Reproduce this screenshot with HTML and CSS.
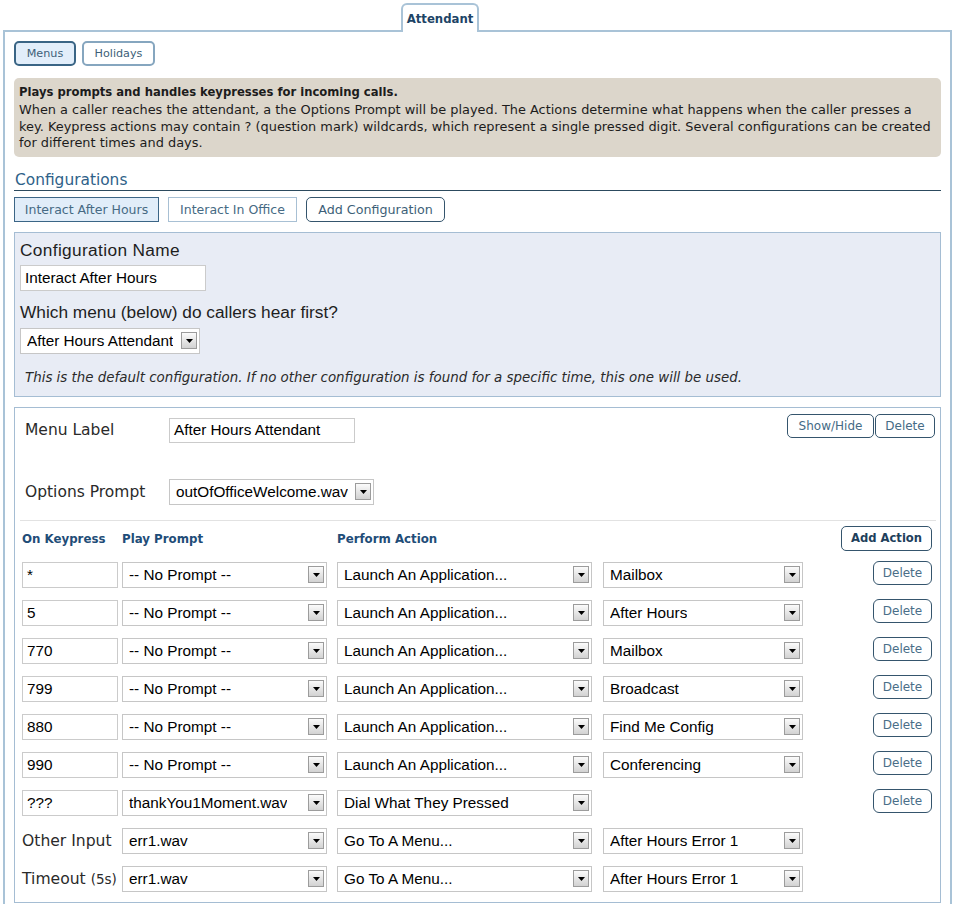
FILE: index.html
```html
<!DOCTYPE html>
<html lang="en">
<head>
<meta charset="utf-8">
<title>Attendant</title>
<link rel="stylesheet" href="styles.css">
</head>
<body>
<div class="tabbar"><div class="tab">Attendant</div></div>
<div class="panel">
  <div class="subtabs">
    <button class="pill pill-active w-menus">Menus</button>
    <button class="pill pill-light w-holidays">Holidays</button>
  </div>
  <div class="info">
    <p class="info-title">Plays prompts and handles keypresses for incoming calls.</p>
    <p class="info-body">When a caller reaches the attendant, a the Options Prompt will be played. The Actions determine what happens when the caller presses a<br>key. Keypress actions may contain ? (question mark) wildcards, which represent a single pressed digit. Several configurations can be created<br>for different times and days.</p>
  </div>

  <h2 class="section-title">Configurations</h2>
  <div class="config-tabs">
    <button class="ctab ctab-active w-c1">Interact After Hours</button>
    <button class="ctab w-c2">Interact In Office</button>
    <button class="pill pill-dark addcfg">Add Configuration</button>
  </div>

  <div class="config-box">
    <div class="cfg-label cfg-name">Configuration Name</div>
    <div class="input w-cfgname">Interact After Hours</div>
    <div class="cfg-label cfg-label-2">Which menu (below) do callers hear first?</div>
    <div class="select w-firstmenu"><span class="val">After Hours Attendant</span><span class="arrow"><svg width="7" height="4" viewBox="0 0 7 4"><path d="M0 0H7L3.5 4Z"/></svg></span></div>
    <p class="note">This is the default configuration. If no other configuration is found for a specific time, this one will be used.</p>
  </div>

  <div class="menu-box">
    <div class="menu-head">
      <div class="menu-fields">
        <div class="mfield">
          <span class="mlabel">Menu Label</span>
          <div class="input w-menulabel">After Hours Attendant</div>
        </div>
        <div class="mfield mfield-2">
          <span class="mlabel">Options Prompt</span>
          <div class="select w-options"><span class="val">outOfOfficeWelcome.wav</span><span class="arrow"><svg width="7" height="4" viewBox="0 0 7 4"><path d="M0 0H7L3.5 4Z"/></svg></span></div>
        </div>
      </div>
      <div class="menu-actions">
        <button class="pill pill-dark sbtn w-show">Show/Hide</button>
        <button class="pill pill-dark sbtn w-del">Delete</button>
      </div>
    </div>
    <div class="sep"></div>

    <div class="grid">
      <div class="row head">
        <span class="hcell">On Keypress</span>
        <span class="hcell">Play Prompt</span>
        <span class="hcell">Perform Action</span>
        <span></span>
        <button class="pill pill-dark addaction">Add Action</button>
      </div>

      <div class="row">
        <div class="input w-key">*</div>
        <div class="select w-prompt"><span class="val">-- No Prompt --</span><span class="arrow"><svg width="7" height="4" viewBox="0 0 7 4"><path d="M0 0H7L3.5 4Z"/></svg></span></div>
        <div class="select w-action"><span class="val">Launch An Application...</span><span class="arrow"><svg width="7" height="4" viewBox="0 0 7 4"><path d="M0 0H7L3.5 4Z"/></svg></span></div>
        <div class="select w-target"><span class="val">Mailbox</span><span class="arrow"><svg width="7" height="4" viewBox="0 0 7 4"><path d="M0 0H7L3.5 4Z"/></svg></span></div>
        <button class="pill pill-dark delbtn">Delete</button>
      </div>
      <div class="row">
        <div class="input w-key">5</div>
        <div class="select w-prompt"><span class="val">-- No Prompt --</span><span class="arrow"><svg width="7" height="4" viewBox="0 0 7 4"><path d="M0 0H7L3.5 4Z"/></svg></span></div>
        <div class="select w-action"><span class="val">Launch An Application...</span><span class="arrow"><svg width="7" height="4" viewBox="0 0 7 4"><path d="M0 0H7L3.5 4Z"/></svg></span></div>
        <div class="select w-target"><span class="val">After Hours</span><span class="arrow"><svg width="7" height="4" viewBox="0 0 7 4"><path d="M0 0H7L3.5 4Z"/></svg></span></div>
        <button class="pill pill-dark delbtn">Delete</button>
      </div>
      <div class="row">
        <div class="input w-key">770</div>
        <div class="select w-prompt"><span class="val">-- No Prompt --</span><span class="arrow"><svg width="7" height="4" viewBox="0 0 7 4"><path d="M0 0H7L3.5 4Z"/></svg></span></div>
        <div class="select w-action"><span class="val">Launch An Application...</span><span class="arrow"><svg width="7" height="4" viewBox="0 0 7 4"><path d="M0 0H7L3.5 4Z"/></svg></span></div>
        <div class="select w-target"><span class="val">Mailbox</span><span class="arrow"><svg width="7" height="4" viewBox="0 0 7 4"><path d="M0 0H7L3.5 4Z"/></svg></span></div>
        <button class="pill pill-dark delbtn">Delete</button>
      </div>
      <div class="row">
        <div class="input w-key">799</div>
        <div class="select w-prompt"><span class="val">-- No Prompt --</span><span class="arrow"><svg width="7" height="4" viewBox="0 0 7 4"><path d="M0 0H7L3.5 4Z"/></svg></span></div>
        <div class="select w-action"><span class="val">Launch An Application...</span><span class="arrow"><svg width="7" height="4" viewBox="0 0 7 4"><path d="M0 0H7L3.5 4Z"/></svg></span></div>
        <div class="select w-target"><span class="val">Broadcast</span><span class="arrow"><svg width="7" height="4" viewBox="0 0 7 4"><path d="M0 0H7L3.5 4Z"/></svg></span></div>
        <button class="pill pill-dark delbtn">Delete</button>
      </div>
      <div class="row">
        <div class="input w-key">880</div>
        <div class="select w-prompt"><span class="val">-- No Prompt --</span><span class="arrow"><svg width="7" height="4" viewBox="0 0 7 4"><path d="M0 0H7L3.5 4Z"/></svg></span></div>
        <div class="select w-action"><span class="val">Launch An Application...</span><span class="arrow"><svg width="7" height="4" viewBox="0 0 7 4"><path d="M0 0H7L3.5 4Z"/></svg></span></div>
        <div class="select w-target"><span class="val">Find Me Config</span><span class="arrow"><svg width="7" height="4" viewBox="0 0 7 4"><path d="M0 0H7L3.5 4Z"/></svg></span></div>
        <button class="pill pill-dark delbtn">Delete</button>
      </div>
      <div class="row">
        <div class="input w-key">990</div>
        <div class="select w-prompt"><span class="val">-- No Prompt --</span><span class="arrow"><svg width="7" height="4" viewBox="0 0 7 4"><path d="M0 0H7L3.5 4Z"/></svg></span></div>
        <div class="select w-action"><span class="val">Launch An Application...</span><span class="arrow"><svg width="7" height="4" viewBox="0 0 7 4"><path d="M0 0H7L3.5 4Z"/></svg></span></div>
        <div class="select w-target"><span class="val">Conferencing</span><span class="arrow"><svg width="7" height="4" viewBox="0 0 7 4"><path d="M0 0H7L3.5 4Z"/></svg></span></div>
        <button class="pill pill-dark delbtn">Delete</button>
      </div>
      <div class="row">
        <div class="input w-key">???</div>
        <div class="select w-prompt"><span class="val">thankYou1Moment.wav</span><span class="arrow"><svg width="7" height="4" viewBox="0 0 7 4"><path d="M0 0H7L3.5 4Z"/></svg></span></div>
        <div class="select w-action"><span class="val">Dial What They Pressed</span><span class="arrow"><svg width="7" height="4" viewBox="0 0 7 4"><path d="M0 0H7L3.5 4Z"/></svg></span></div>
        <span></span>
        <button class="pill pill-dark delbtn">Delete</button>
      </div>
      <div class="row">
        <span class="rlabel">Other Input</span>
        <div class="select w-prompt"><span class="val">err1.wav</span><span class="arrow"><svg width="7" height="4" viewBox="0 0 7 4"><path d="M0 0H7L3.5 4Z"/></svg></span></div>
        <div class="select w-action"><span class="val">Go To A Menu...</span><span class="arrow"><svg width="7" height="4" viewBox="0 0 7 4"><path d="M0 0H7L3.5 4Z"/></svg></span></div>
        <div class="select w-target"><span class="val">After Hours Error 1</span><span class="arrow"><svg width="7" height="4" viewBox="0 0 7 4"><path d="M0 0H7L3.5 4Z"/></svg></span></div>
        <span></span>
      </div>
      <div class="row">
        <span class="rlabel">Timeout <span class="small">(5s)</span></span>
        <div class="select w-prompt"><span class="val">err1.wav</span><span class="arrow"><svg width="7" height="4" viewBox="0 0 7 4"><path d="M0 0H7L3.5 4Z"/></svg></span></div>
        <div class="select w-action"><span class="val">Go To A Menu...</span><span class="arrow"><svg width="7" height="4" viewBox="0 0 7 4"><path d="M0 0H7L3.5 4Z"/></svg></span></div>
        <div class="select w-target"><span class="val">After Hours Error 1</span><span class="arrow"><svg width="7" height="4" viewBox="0 0 7 4"><path d="M0 0H7L3.5 4Z"/></svg></span></div>
        <span></span>
      </div>
    </div>
  </div>
</div>
</body>
</html>
```

FILE: styles.css
```css
* { box-sizing: border-box; }
html, body { margin: 0; padding: 0; background: #fff; }
body {
  font-family: "DejaVu Sans", Lato, sans-serif;
  color: #222;
  width: 954px;
  height: 904px;
  overflow: hidden;
}
p { margin: 0; }
h2 { margin: 0; font-weight: normal; }
button { font-family: "DejaVu Sans", Lato, sans-serif; cursor: pointer; margin: 0; white-space: nowrap; }

/* top tab */
.tabbar {
  display: flex;
  height: 30px;
  padding: 3px 0 0 401px;
}
.tab {
  position: relative;
  z-index: 2;
  width: 78px;
  height: 29px;
  border: 2px solid #a9c3d7;
  border-bottom: none;
  border-radius: 6px 6px 0 0;
  background: #fff;
  color: #1d4466;
  font-weight: 700;
  font-size: 11.7px;
  display: flex;
  align-items: center;
  justify-content: center;
  padding-top: 1px;
}

/* main panel */
.panel {
  margin: 0 2px 0 3px;
  border: 2px solid #a9c3d7;
  border-bottom: none;
  padding: 9px 9px 0 9px;
  min-height: 874px;
}

.subtabs { display: flex; gap: 6px; }
.pill {
  height: 25px;
  padding: 0;
  border-radius: 5px;
  background: #fff;
  font-size: 11.2px;
  color: #3d5f78;
  display: inline-flex;
  align-items: center;
  justify-content: center;
}
.pill-active { border: 2px solid #3a6585; background: #e2eefa; }
.pill-light { border: 2px solid #86a6bf; }
.pill-dark { border: 1px solid #35556d; }
.w-menus { width: 62px; }
.w-holidays { width: 73px; }

.info {
  margin-top: 12px;
  background: #dcd6cb;
  border-radius: 5px;
  padding: 4px 5px 5px 5px;
  font-size: 12.9px;
  color: #1c1c1c;
}
.info-title { font-weight: 700; font-size: 11.6px; line-height: 20px; }
.info-body { line-height: 16.5px; white-space: nowrap; }

.section-title {
  margin-top: 13px;
  font-size: 15.4px;
  line-height: 20px;
  color: #2e6189;
  border-bottom: 1px solid #2c4a5e;
  padding-left: 1px;
}

.config-tabs { display: flex; gap: 9px; margin-top: 6px; }
.ctab {
  height: 25px;
  padding: 0;
  border: 1px solid #a8c0d4;
  background: #fff;
  color: #466a84;
  font-size: 12.5px;
}
.ctab-active { border-color: #3b6586; background: #e1edf9; }
.w-c1 { width: 145px; }
.w-c2 { width: 129px; }
.addcfg { width: 139px; font-size: 12.7px; border-radius: 5px; color: #3d5f78; }

.config-box {
  margin-top: 10px;
  background: #e8ecf5;
  border: 1px solid #a5bdd3;
  padding: 7px 5px 9px 5px;
}
.cfg-label {
  font-family: "Liberation Sans", Arial, sans-serif;
  font-size: 17.3px;
  line-height: 20px;
  color: #1e1e1e;
}
.cfg-name { letter-spacing: 0.35px; }
.cfg-label-2 { margin-top: 11px; }

.input {
  background: #fff;
  border: 1px solid #cbcbcb;
  font-family: "Liberation Sans", Arial, sans-serif;
  font-size: 15.3px;
  color: #000;
  height: 26px;
  padding: 0 4px;
  display: flex;
  align-items: center;
  white-space: nowrap;
}
.w-cfgname { width: 186px; margin-top: 5px; }

.select {
  background: #fff;
  border: 1px solid #c6c6c6;
  font-family: "Liberation Sans", Arial, sans-serif;
  font-size: 15.3px;
  color: #000;
  height: 26px;
  padding: 0 2px 0 6px;
  display: flex;
  align-items: center;
  justify-content: space-between;
  white-space: nowrap;
}
.select .val { overflow: hidden; }
.arrow {
  flex: none;
  width: 16px;
  height: 17px;
  border: 1px solid #9c9c9c;
  background: linear-gradient(#fbfbfb, #d2d2d2);
  display: flex;
  align-items: center;
  justify-content: center;
  margin-left: 2px;
}
.arrow svg { display: block; fill: #000; }
.w-firstmenu { width: 180px; margin-top: 6px; }

.note {
  margin-top: 15px;
  padding-left: 5px;
  font-style: italic;
  font-size: 13.4px;
  line-height: 18px;
  color: #2a2a2a;
  white-space: nowrap;
}

/* menu box */
.menu-box {
  margin-top: 10px;
  border: 1px solid #a5bdd3;
  padding: 0 0 10px 0;
}
.menu-head {
  display: flex;
  justify-content: space-between;
  padding: 6px 5px 0 10px;
}
.menu-fields { padding-top: 4px; }
.mfield { display: flex; align-items: center; }
.mfield-2 { margin-top: 36px; }
.mlabel {
  width: 144px;
  font-size: 15.5px;
  color: #2a2a2a;
}
.w-menulabel { width: 186px; height: 25px; }
.w-options { width: 205px; }
.menu-actions { display: flex; align-items: flex-start; gap: 1px; }
.sbtn { height: 24px; font-size: 12px; border-radius: 5px; color: #456b86; }
.w-show { width: 87px; }
.w-del { width: 60px; }

.sep {
  margin: 15px 4px 0 5px;
  border-top: 1px solid #e2e2e2;
}

.grid { padding: 5px 8px 0 7px; }
.row {
  display: grid;
  grid-template-columns: 100px 215px 266px 200px 1fr;
  align-items: center;
  height: 26px;
  margin-bottom: 12px;
}
.row:last-child { margin-bottom: 0; }
.row.head { height: 25px; margin-bottom: 11px; }
.hcell {
  font-weight: 700;
  font-size: 11.8px;
  color: #1f4d78;
  white-space: nowrap;
  padding-top: 1px;
}
.addaction {
  justify-self: end;
  width: 91px;
  height: 25px;
  font-weight: 700;
  font-size: 11.6px;
  color: #1e3f5c;
  border-radius: 5px;
}
.w-key { width: 96px; }
.w-prompt { width: 205px; }
.w-action { width: 255px; }
.w-target { width: 200px; }
.delbtn {
  justify-self: end;
  align-self: start;
  margin-top: -1px;
  width: 59px;
  height: 24px;
  font-size: 12px;
  color: #4a6e88;
  border-radius: 6px;
}
.rlabel {
  font-size: 15.6px;
  color: #2a2a2a;
  white-space: nowrap;
}
.rlabel .small { font-size: 13.5px; }
```
